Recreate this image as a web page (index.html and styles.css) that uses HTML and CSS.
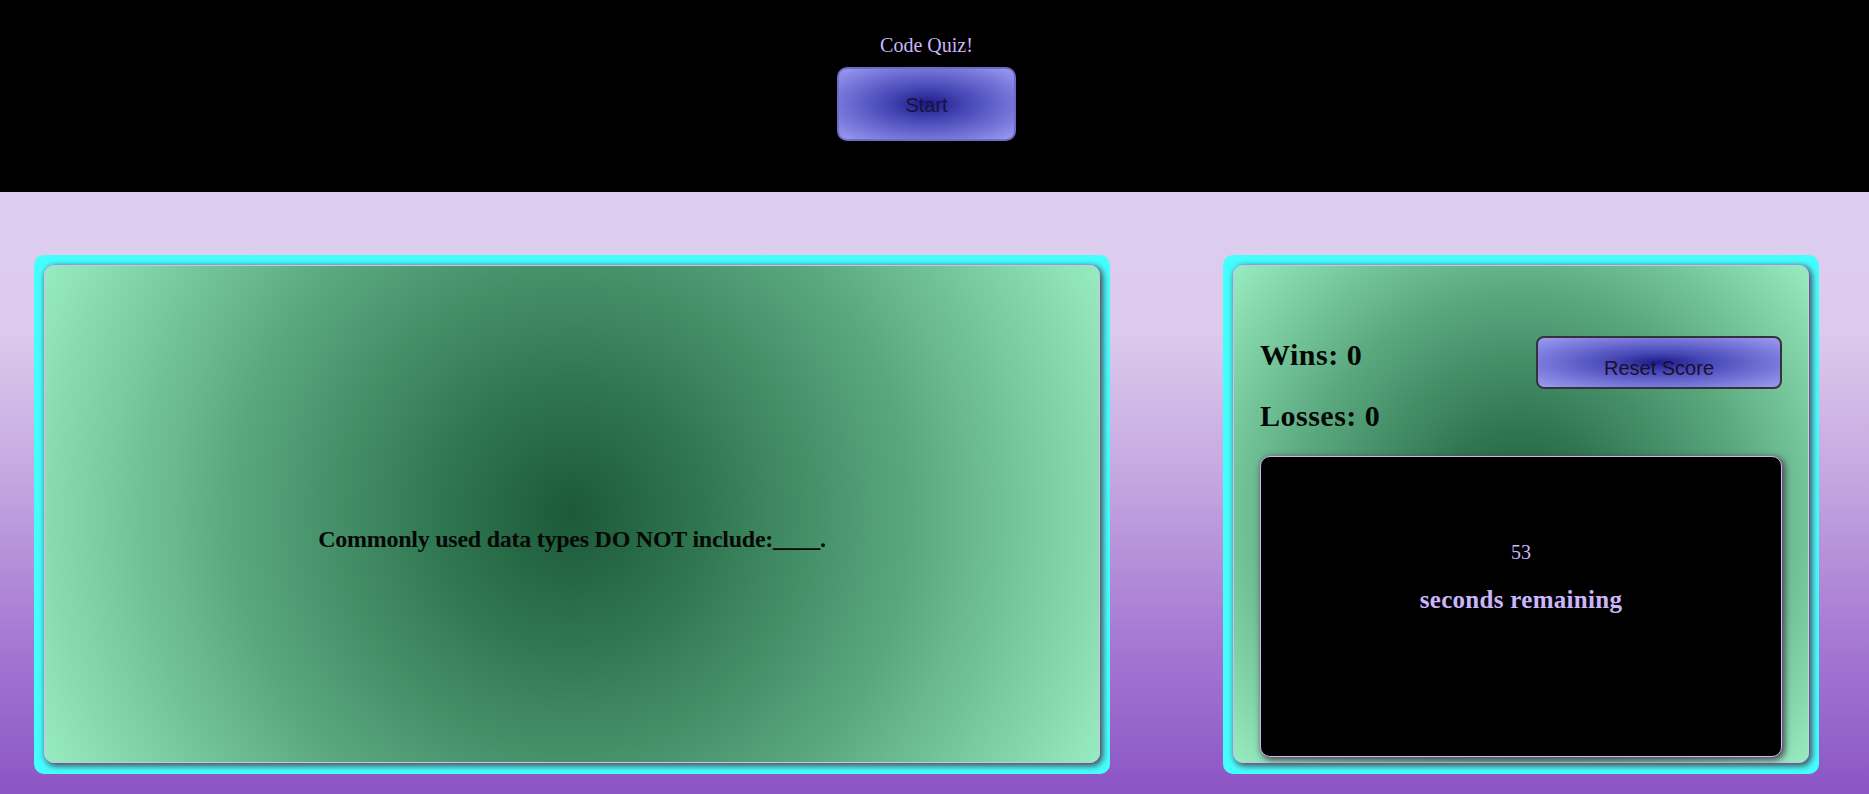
FILE: index.html
```html
<!DOCTYPE html>
<html lang="en">
<head>
<meta charset="utf-8">
<title>Code Quiz</title>
<link rel="stylesheet" href="styles.css">
</head>
<body>
<header class="top">
  <h1 class="title">Code Quiz!</h1>
  <button class="start-btn">Start</button>
</header>
<main class="main">
  <section class="frame frame-quiz">
    <div class="card card-quiz">
      <h2 class="question">Commonly used data types DO NOT include:____.</h2>
    </div>
  </section>
  <section class="frame frame-score">
    <div class="card card-score">
      <div class="score-row">
        <h2 class="score wins">Wins: 0</h2>
        <button class="reset-btn">Reset Score</button>
      </div>
      <h2 class="score losses">Losses: 0</h2>
      <div class="timer">
        <p class="timer-count">53</p>
        <p class="timer-label">seconds remaining</p>
      </div>
    </div>
  </section>
</main>
</body>
</html>
```
FILE: styles.css
```css
html, body {
  margin: 0;
  padding: 0;
}
body {
  width: 1869px;
  height: 794px;
  overflow: hidden;
  font-family: "Liberation Serif", "Times New Roman", serif;
  background: linear-gradient(to bottom, #000 0, #000 192px, #ddcdee 192px, #dccbed 330px, #c4a6e0 480px, #a679d3 640px, #8b55c4 794px);
}
.top {
  height: 192px;
  box-sizing: border-box;
  background: #000;
  display: flex;
  flex-direction: column;
  align-items: center;
  padding: 35px 16px 0 0;
}
.title {
  margin: 0;
  font-size: 20px;
  line-height: 20px;
  font-weight: normal;
  color: #cbb5fb;
}
.start-btn {
  margin-top: 12px;
  width: 179px;
  height: 74px;
  border: 2px solid #6c6cc4;
  border-radius: 10px;
  background: radial-gradient(ellipse at center, #1b1b8c 0%, #4a4ab8 35%, #7474d8 70%, #9c9cf2 100%);
  font-family: "Liberation Sans", Arial, sans-serif;
  font-size: 20px;
  color: #15153a;
  padding: 2px 0 0 0;
}
.main {
  display: flex;
  justify-content: space-between;
  padding: 63px 50px 0 34px;
}
.frame {
  height: 519px;
  box-sizing: border-box;
  background: #45ffff;
  border-radius: 10px;
  padding: 10px 10px 11px 10px;
  display: flex;
}
.frame-quiz { width: 1076px; }
.frame-score { width: 596px; }
.card {
  flex: 1;
  border: 1px solid #dcb9f4;
  border-radius: 10px;
  box-shadow: 2px 2px 6px 1px #4a4a55;
  box-sizing: border-box;
  background: radial-gradient(circle farthest-corner at center, #1c5939 0%, #2f7650 22%, #5aa77e 58%, #97ecbf 100%);
}
.card-quiz {
  display: flex;
  align-items: center;
  justify-content: center;
  padding-top: 50px;
}
.question {
  margin: 0;
  font-size: 24px;
  line-height: 24px;
  font-weight: bold;
  letter-spacing: -0.25px;
  color: #050805;
}
.card-score {
  display: flex;
  flex-direction: column;
  padding: 70px 26px 0 26px;
}
.score-row {
  display: flex;
  justify-content: space-between;
  align-items: flex-start;
}
.score {
  margin: 0;
  font-size: 30px;
  line-height: 28px;
  font-weight: bold;
  letter-spacing: 0.5px;
  color: #050805;
}
.wins { margin-top: 5px; }
.losses { margin-top: 13px; }
.reset-btn {
  width: 246px;
  height: 53px;
  border: 2px solid #333338;
  border-radius: 8px;
  background: radial-gradient(ellipse farthest-corner at center, #1b1b8c 0%, #4a4ab8 30%, #7474d8 65%, #9c9cf2 100%);
  font-family: "Liberation Sans", Arial, sans-serif;
  font-size: 20px;
  color: #1a0f2a;
  padding: 11px 0 0 0;
}
.timer {
  margin-top: 26px;
  height: 301px;
  box-sizing: border-box;
  background: #000;
  border: 1px solid #d4b2f2;
  border-radius: 10px;
  box-shadow: 2px 2px 6px 1px #4a4a55;
  display: flex;
  flex-direction: column;
  align-items: center;
  padding-top: 86px;
}
.timer-count {
  margin: 0;
  font-size: 20px;
  line-height: 19px;
  color: #cbb5fb;
}
.timer-label {
  margin: 26px 0 0 0;
  font-size: 25px;
  line-height: 24px;
  font-weight: bold;
  letter-spacing: 0.3px;
  color: #cbb5fb;
}
```
